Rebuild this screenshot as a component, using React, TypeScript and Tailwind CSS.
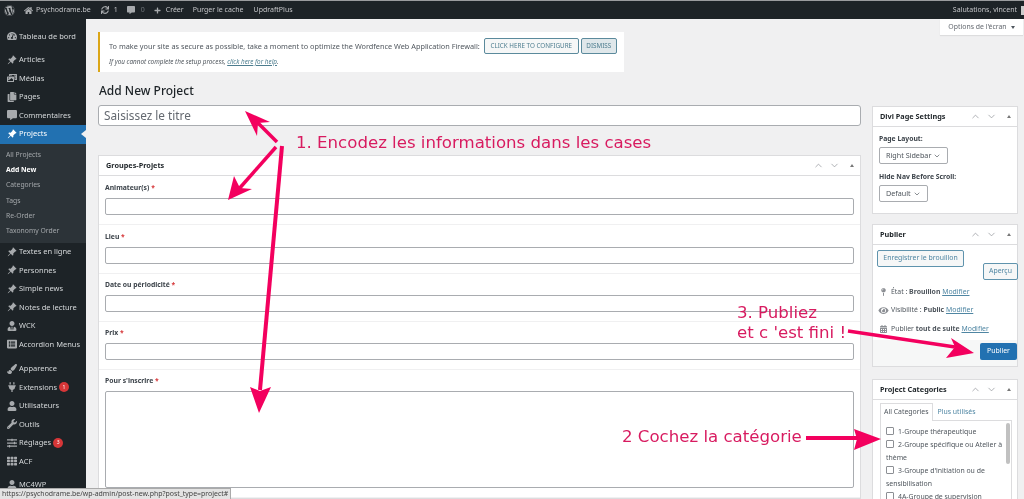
import React from "react";
import { FaWordpress, FaHome, FaSync, FaCommentAlt, FaPlus, FaTachometerAlt, FaPhotoVideo, FaCopy, FaPaintBrush, FaPlug, FaUser, FaWrench, FaSlidersH, FaTh, FaListAlt, FaUserTie, FaMapPin, FaEye, FaCalendarAlt } from "react-icons/fa";
import { BsPinAngleFill } from "react-icons/bs";
import { ChevronUp, ChevronDown } from "lucide-react";

const font = { fontFamily: '"Noto Sans", "Open Sans", sans-serif' };
const dejavu = { fontFamily: '"DejaVu Sans", sans-serif' };

function MenuItem({ icon: Icon, label, badge, h = "h-[18.5px]", active = false }: any) {
  return (
    <div className={`${h} relative flex items-center pl-[5px] text-[7.5px] ${active ? "bg-[#2271b1] text-white" : "text-[#d5d8da]"}`}>
      <span className={`w-[14px] flex justify-center ${active ? "text-white" : "text-[#a7aaad]"}`}><Icon size={10} /></span>
      <span className="whitespace-nowrap">{label}</span>
      {badge && <span className="ml-[2px] w-[10px] h-[10px] rounded-full bg-[#d63638] text-white text-[5px] flex items-center justify-center">{badge}</span>}
      {active && <span className="absolute right-0 top-[5px] w-0 h-0 border-y-[4px] border-y-transparent border-r-[5px] border-r-[#f0f0f1]" />}
    </div>
  );
}

function Sub({ label, on = false }: { label: string; on?: boolean }) {
  return <div className={`h-[15.2px] pl-[6px] flex items-center text-[6.8px] ${on ? "text-white font-bold" : "text-[#a4a8ab]"}`}>{label}</div>;
}

function Arrows() {
  return (
    <div className="flex items-center gap-[2px] text-[#8c8f94]">
      <ChevronUp size={11} strokeWidth={1.5} />
      <ChevronDown size={11} strokeWidth={1.5} className="ml-[3px]" />
      <span className="ml-[8px] w-0 h-0 border-x-[2.5px] border-x-transparent border-b-[3.5px] border-b-[#777]" />
    </div>
  );
}

function BoxHead({ title }: { title: string }) {
  return (
    <div className="h-[20px] pr-[6px] flex items-center justify-between pl-[7px] border-b border-[#dcdcde] text-[7.3px] font-bold text-[#1d2327]">
      <span>{title}</span>
      <Arrows />
    </div>
  );
}

function Field({ label, h = "h-[17px]", mt = "mt-[7px]" }: { label: string; h?: string; mt?: string }) {
  return (
    <div className={`${mt} border-b border-[#f0f0f1] pb-[9px] px-[6px]`}>
      <div className="h-[11px] flex items-center text-[6.8px] font-bold text-[#3c434a]">
        {label}&nbsp;<span className="text-[#d63638]">*</span>
      </div>
      <div className={`${h} mt-[4px] bg-white border border-[#a9acb0] rounded-[2px]`} />
    </div>
  );
}

function Cat({ label, cont }: { label: string; cont?: string }) {
  return (
    <div className="text-[6.9px] text-[#50575e] leading-[12.9px] whitespace-nowrap">
      <span className="inline-block w-[8px] h-[8px] border border-[#8c8f94] rounded-[1px] bg-white align-[-1px] mr-[4px]" />
      {label}
      {cont && <div>{cont}</div>}
    </div>
  );
}

function Select({ w, label }: { w: string; label: string }) {
  return (
    <div className={`${w} mt-[3px] h-[17px] border border-[#a9acb0] rounded-[2px] flex items-center justify-between px-[6px] text-[7.2px] text-[#50575e] whitespace-nowrap`}>
      {label} <ChevronDown size={8} />
    </div>
  );
}

export default function App() {
  return (
    <div className="relative w-[1024px] h-[499px] overflow-hidden bg-[#f0f0f1] flex flex-col blur-[0.35px]" style={font}>
      <div className="h-[1px] shrink-0 bg-[#9a9c9e]" />
      <header className="h-[18px] shrink-0 bg-[#1d2327] flex items-center text-[7px] text-[#c3c4c7]">
        <FaWordpress size={11} className="ml-[4px] text-[#a7aaad]" />
        <FaHome size={9} className="ml-[9px] text-[#a7aaad]" />
        <span className="ml-[3px]">Psychodrame.be</span>
        <FaSync size={8} className="ml-[10px] text-[#a7aaad]" />
        <span className="ml-[5px]">1</span>
        <FaCommentAlt size={8} className="ml-[9px] text-[#a7aaad]" />
        <span className="ml-[6px] text-[#70757a]">0</span>
        <FaPlus size={7} className="ml-[9px] text-[#a7aaad]" />
        <span className="ml-[5px]">Créer</span>
        <span className="ml-[9px]">Purger le cache</span>
        <span className="ml-[10px]">UpdraftPlus</span>
        <span className="ml-auto mr-[4px]">Salutations, vincent</span>
        <span className="w-[3px] h-[9px] bg-[#ccc]" />
      </header>
      <div className="flex flex-1 min-h-0">
        <aside className="w-[86px] shrink-0 bg-[#1d2327] pt-[8px]">
          <MenuItem icon={FaTachometerAlt} label="Tableau de bord" />
          <div className="h-[5px]" />
          <MenuItem icon={BsPinAngleFill} label="Articles" />
          <MenuItem icon={FaPhotoVideo} label="Médias" />
          <MenuItem icon={FaCopy} label="Pages" />
          <MenuItem icon={FaCommentAlt} label="Commentaires" />
          <MenuItem icon={BsPinAngleFill} label="Projects" active h="h-[19px]" />
          <div className="bg-[#2c3338] h-[99px] pt-[4px]">
            <Sub label="All Projects" />
            <Sub label="Add New" on />
            <Sub label="Categories" />
            <Sub label="Tags" />
            <Sub label="Re-Order" />
            <Sub label="Taxonomy Order" />
          </div>
          <MenuItem icon={BsPinAngleFill} label="Textes en ligne" />
          <MenuItem icon={BsPinAngleFill} label="Personnes" />
          <MenuItem icon={BsPinAngleFill} label="Simple news" />
          <MenuItem icon={BsPinAngleFill} label="Notes de lecture" />
          <MenuItem icon={FaUserTie} label="WCK" />
          <MenuItem icon={FaListAlt} label="Accordion Menus" />
          <div className="h-[6px]" />
          <MenuItem icon={FaPaintBrush} label="Apparence" />
          <MenuItem icon={FaPlug} label="Extensions" badge="1" />
          <MenuItem icon={FaUser} label="Utilisateurs" />
          <MenuItem icon={FaWrench} label="Outils" />
          <MenuItem icon={FaSlidersH} label="Réglages" badge="3" />
          <MenuItem icon={FaTh} label="ACF" />
          <div className="h-[5px]" />
          <MenuItem icon={FaUser} label="MC4WP" />
        </aside>
        <main className="flex-1 min-w-0 pl-[12px] pr-[6px] relative">
          <div className="flex justify-end -mr-[5px]">
            <div className="w-[83px] h-[16px] bg-white text-[6.9px] text-[#646970] flex items-center justify-center gap-[4px] shadow-[0_1px_1px_rgba(0,0,0,0.08)]">
              Options de l'écran
              <span className="w-0 h-0 border-x-[2.5px] border-x-transparent border-t-[3.5px] border-t-[#50575e]" />
            </div>
          </div>
          <div className="mt-[-3px] w-[526px] h-[40px] bg-white border-l-[2px] border-[#dba617] pl-[9px] pt-[6px]">
            <div className="flex items-center h-[16px] text-[7.32px] text-[#50575e] whitespace-nowrap">
              <span>To make your site as secure as possible, take a moment to optimize the Wordfence Web Application Firewall:</span>
              <span className="ml-[4px] h-[16px] w-[95px] border border-[#5b8a9c] rounded-[2px] flex items-center justify-center text-[6.3px] text-[#4c7c8e] bg-[#f6f7f7]">CLICK HERE TO CONFIGURE</span>
              <span className="ml-[2px] h-[16px] w-[36px] border border-[#5b8a9c] rounded-[2px] flex items-center justify-center text-[6.3px] text-[#4c7c8e] bg-[#dfe7ea]">DISMISS</span>
            </div>
            <div className="mt-[3px] text-[6.35px] italic text-[#50575e]">If you cannot complete the setup process, <span className="underline text-[#4c7c8e]">click here</span> <span className="underline text-[#4c7c8e]">for help</span>.</div>
          </div>
          <h1 className="mt-[11px] h-[16px] flex items-center text-[12px] font-medium text-[#1d2327] pl-[1px]">Add New Project</h1>
          <div className="mt-[6px] flex gap-[11px] items-start">
            <div className="w-[763px] shrink-0">
              <div className="h-[21px] bg-white border border-[#a9acb0] rounded-[3px] flex items-center pl-[5px] pt-[1px] text-[11.8px] text-[#646970]">Saisissez le titre</div>
              <div className="mt-[29px] bg-white border border-[#dcdcde]">
                <BoxHead title="Groupes-Projets" />
                <Field label="Animateur(s)" mt="mt-[7px]" />
                <Field label="Lieu" />
                <Field label="Date ou périodicité" mt="mt-[6px]" />
                <Field label="Prix" mt="mt-[6px]" />
                <Field label="Pour s'inscrire" h="h-[97px]" mt="mt-[6px]" />
              </div>
            </div>
            <div className="flex-1 min-w-0 mt-[1px]">
              <div className="h-[108px] bg-white border border-[#dcdcde]">
                <BoxHead title="Divi Page Settings" />
                <div className="px-[6px] pt-[7px]">
                  <div className="text-[6.8px] font-bold text-[#3c434a] leading-[10px]">Page Layout:</div>
                  <Select w="w-[69px]" label="Right Sidebar" />
                  <div className="mt-[8px] text-[6.8px] font-bold text-[#3c434a] leading-[10px]">Hide Nav Before Scroll:</div>
                  <Select w="w-[49px]" label="Default" />
                </div>
              </div>
              <div className="mt-[10px] h-[143px] bg-white border border-[#dcdcde] flex flex-col">
                <BoxHead title="Publier" />
                <div className="px-[4px] pt-[5px] flex-1">
                  <div className="w-[87px] h-[17px] border border-[#5f93ad] rounded-[2px] bg-[#f6f7f7] text-[6.9px] text-[#4f86a3] flex items-center justify-center whitespace-nowrap">Enregistrer le brouillon</div>
                  <div className="ml-[106px] mt-[-4px] w-[35px] h-[17px] border border-[#5f93ad] rounded-[2px] bg-[#f6f7f7] text-[6.9px] text-[#4f86a3] flex items-center justify-center">Aperçu</div>
                  <div className="mt-[3px] flex items-center h-[18px] text-[6.9px] text-[#50575e]"><FaMapPin size={8} className="w-[13px] text-[#8c8f94]" /><span className="ml-[1px]">État : <b>Brouillon</b> <span className="underline text-[#4f86a3]">Modifier</span></span></div>
                  <div className="flex items-center h-[18.5px] text-[6.9px] text-[#50575e]"><FaEye size={9} className="w-[13px] text-[#8c8f94]" /><span className="ml-[1px]">Visibilité : <b>Public</b> <span className="underline text-[#4f86a3]">Modifier</span></span></div>
                  <div className="flex items-center h-[18.5px] text-[6.9px] text-[#50575e]"><FaCalendarAlt size={8} className="w-[13px] text-[#8c8f94]" /><span className="ml-[1px]">Publier <b>tout de suite</b> <span className="underline text-[#4f86a3]">Modifier</span></span></div>
                </div>
                <div className="h-[26px] bg-[#f6f7f7] relative">
                  <div className="absolute right-0 top-[3px] w-[37px] h-[17px] rounded-[2px] bg-[#2271b1] text-white text-[6.9px] flex items-center justify-center">Publier</div>
                </div>
              </div>
              <div className="mt-[12px] h-[130px] bg-white border border-[#dcdcde]">
                <BoxHead title="Project Categories" />
                <div className="ml-[7px] mr-[5px] mt-[3px]">
                  <div className="flex h-[18px] text-[6.9px] items-center">
                    <span className="h-full flex items-center px-[3px] border border-b-0 border-[#dcdcde] text-[#50575e] bg-white relative z-10">All Categories</span>
                    <span className="ml-[5px] text-[#4f86a3]">Plus utilisés</span>
                  </div>
                  <div className="h-[100px] border border-[#dcdcde] pl-[5px] pr-[6px] pt-[5px] relative -mt-[1px]">
                    <Cat label="1-Groupe thérapeutique" />
                    <Cat label="2-Groupe spécifique ou Atelier à" cont="thème" />
                    <Cat label="3-Groupe d'initiation ou de" cont="sensibilisation" />
                    <Cat label="4A-Groupe de supervision" />
                    <span className="absolute right-[1px] top-[2px] w-[4px] h-[41px] bg-[#c1c1c1] rounded-[2px]" />
                  </div>
                </div>
              </div>
            </div>
          </div>
        </main>
      </div>

      <svg className="absolute inset-0 pointer-events-none" width="1024" height="499" viewBox="0 0 1024 499" fill="#f3005e">
        <g stroke="#f3005e" strokeWidth="3.5" fill="none">
          <path d="M277 142 L256 121" />
          <path d="M276 147 L238 190" />
          <path d="M282 146 L260 390" strokeWidth="4" />
          <path d="M848 331 L955 347" />
          <path d="M806 438 L858 438" strokeWidth="4" />
        </g>
        <polygon points="245,111 270,122 258,123 257,136" />
        <polygon points="228,200 234,176 240,188 252,189" />
        <polygon points="259,413 250,387 260,391 271,387" />
        <polygon points="974,353 951,338 955,347 946,358" />
        <polygon points="881,439 854,429 857,439 854,450" />
      </svg>
      <div className="absolute left-[296px] top-[132px] text-[16.6px] leading-[22px] text-[#d81b60] whitespace-nowrap" style={dejavu}>1. Encodez les informations dans les cases</div>
      <div className="absolute left-[737px] top-[303px] text-[16.6px] leading-[20px] text-[#d81b60] whitespace-nowrap" style={dejavu}>3. Publiez<br />et c 'est fini !</div>
      <div className="absolute left-[622px] top-[426px] text-[16.6px] leading-[22px] text-[#d81b60] whitespace-nowrap" style={dejavu}>2 Cochez la catégorie</div>
      <div className="absolute left-0 bottom-0 h-[11px] w-[231px] bg-[#e3e3e3] border-t border-r border-[#aaa] text-[6.95px] text-[#444] flex items-center pl-[2px] whitespace-nowrap">https://psychodrame.be/wp-admin/post-new.php?post_type=project#</div>
    </div>
  );
}
